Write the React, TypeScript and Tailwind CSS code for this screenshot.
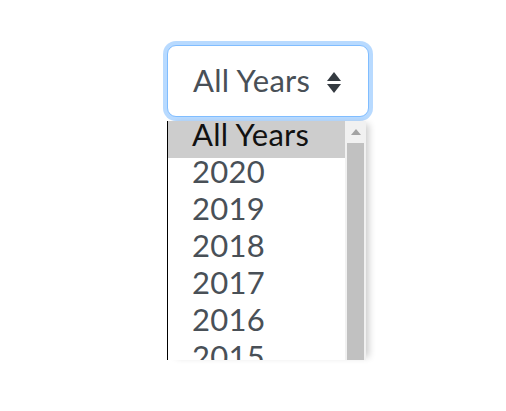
import React from "react";

const years = ["All Years", "2020", "2019", "2018", "2017", "2016", "2015"];

export default function App() {
  return (
    <div
      className="w-[506px] h-[411px] bg-white overflow-hidden"
      style={{ fontFamily: "Lato, 'Noto Sans', sans-serif" }}
    >
      <div className="pt-[45px] pl-[167px]">
        <div className="relative w-[202px]">
          <div className="h-[72px] w-[202px] rounded-[9px] border border-[#80bdff] bg-white shadow-[0_0_0_4px_rgba(0,123,255,0.28)] flex items-center pl-[25px] pr-[27px] justify-between">
            <span className="text-[31px] leading-[38px] tracking-[0.3px] text-[#495057] -mt-[3px]">All Years</span>
            <svg width="14" height="21" viewBox="0 0 14 21" className="mt-[3px]">
              <polygon points="7,0 14,9 0,9" fill="#343a40" />
              <polygon points="0,12 14,12 7,21" fill="#343a40" />
            </svg>
          </div>
          <div className="absolute left-0 top-[76px] w-[199px] h-[239px] bg-white border-l border-black shadow-[6px_0_7px_-3px_rgba(0,0,0,0.2)] flex overflow-hidden">
            <div className="flex-1 flex flex-col">
              {years.map((y, i) => (
                <div
                  key={y}
                  className={
                    i === 0
                      ? "h-[37px] shrink-0 pl-[24px] bg-[#cdcdcd] text-[#111111] text-[31px] leading-[25px] tracking-[0.3px]"
                      : "h-[37px] shrink-0 pl-[24px] text-[#495057] text-[31px] leading-[25px] tracking-[0.3px]"
                  }
                >
                  <span className="block pt-[1px]">{y}</span>
                </div>
              ))}
            </div>
            <div className="w-[21px] bg-[#f1f1f1] flex flex-col items-center">
              <svg width="10" height="6" viewBox="0 0 10 6" className="mt-[8px]">
                <polygon points="5,0 10,6 0,6" fill="#a3a3a3" />
              </svg>
              <div className="mt-[8px] w-[17px] flex-1 bg-[#c1c1c1]" />
            </div>
          </div>
        </div>
      </div>
    </div>
  );
}
